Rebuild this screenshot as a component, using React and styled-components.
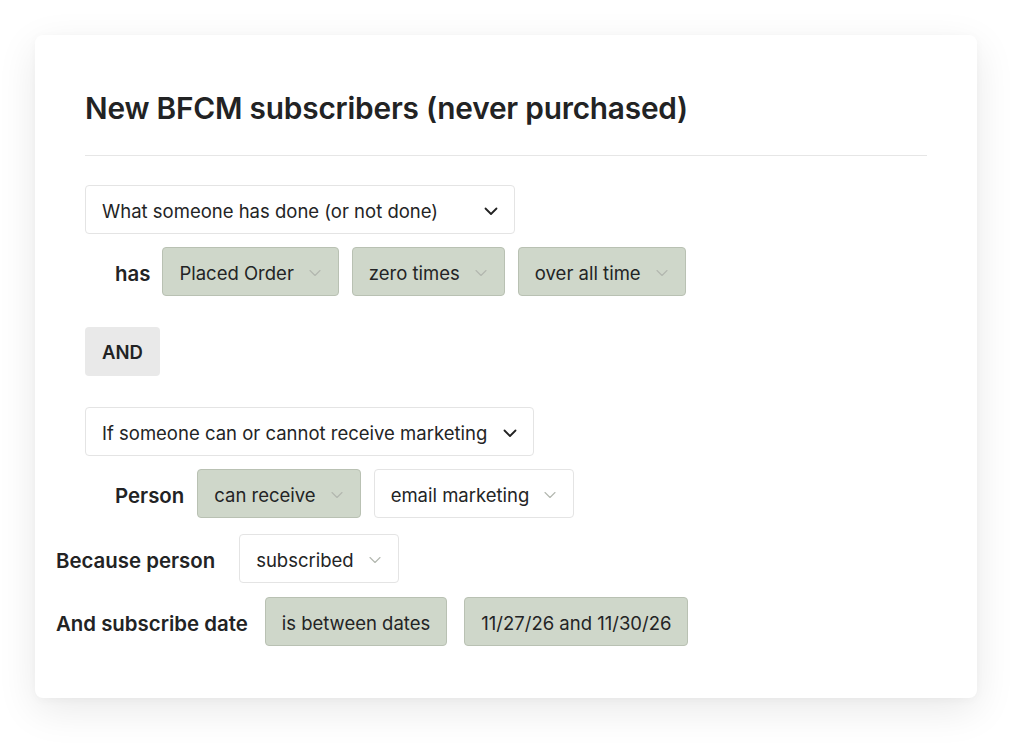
import styled, {createGlobalStyle} from 'styled-components';

const GlobalStyle = createGlobalStyle`
    html, body {
        margin: 0;
        padding: 0;
        background: #ffffff;
    }
    body {
        font-family: Inter, "Noto Sans", "Liberation Sans", sans-serif;
        color: #222324;
    }
`;

const Page = styled.div`
    width: 1032px;
    height: 753px;
    padding: 35px 0 0 35px;
    box-sizing: border-box;
`;

const Card = styled.div`
    width: 942px;
    height: 663px;
    box-sizing: border-box;
    background: #ffffff;
    border-radius: 8px;
    box-shadow: 0 12px 40px rgba(0, 0, 0, 0.09), 0 2px 10px rgba(0, 0, 0, 0.03);
    padding: 55px 50px 0 50px;
`;

const Title = styled.h1`
    margin: 0;
    font-size: 29.8px;
    font-weight: 600;
    letter-spacing: -0.2px;
    line-height: 36px;
    padding-bottom: 29px;
    border-bottom: 1px solid #e6e6e6;
`;

const Body = styled.div`
    display: flex;
    flex-direction: column;
    padding-top: 29px;
`;

const Row = styled.div`
    display: flex;
    align-items: center;
    gap: ${({gap}) => gap || 13}px;
    margin-top: ${({top}) => top || 0}px;
    margin-left: ${({indent}) => indent || 0}px;
`;

const Label = styled.span`
    font-size: 20.4px;
    font-weight: 600;
    padding-top: 3px;
    margin-right: ${({space}) => space || 0}px;
`;

const Select = styled.div`
    display: inline-flex;
    align-items: center;
    justify-content: space-between;
    height: 49px;
    box-sizing: border-box;
    padding: 2px ${({arrow}) => (arrow ? 17 : 16)}px 0 16px;
    width: ${({w}) => (w ? `${w}px` : 'auto')};
    border: 1px solid ${({filled}) => (filled ? '#b9c1b3' : '#e4e4e4')};
    background: ${({filled}) => (filled ? '#cfd7ca' : '#ffffff')};
    border-radius: 4px;
    font-size: 18.5px;
    color: #232425;
    white-space: nowrap;
`;

const Chevron = styled.svg`
    width: ${({size}) => size}px;
    height: ${({size}) => size}px;
    margin-left: ${({gap}) => gap}px;
    flex-shrink: 0;
`;

const AndButton = styled.div`
    display: inline-flex;
    align-items: center;
    justify-content: center;
    align-self: flex-start;
    width: 75px;
    height: 49px;
    margin-top: 31px;
    padding-top: 1px;
    box-sizing: border-box;
    border-radius: 4px;
    background: #e9e9e9;
    font-size: 18.5px;
    font-weight: 600;
`;

const DarkDown = () => (
    <Chevron size={14} gap={14} viewBox="0 0 14 14" fill="none">
        <path d="M1.5 4.5L7 10L12.5 4.5" stroke="#222" strokeWidth="1.8" strokeLinecap="round"
              strokeLinejoin="round"/>
    </Chevron>
);

const LightDown = () => (
    <Chevron size={12} gap={15} viewBox="0 0 12 12" fill="none">
        <path d="M1 3.5L6 8.5L11 3.5" stroke="#b2b7af" strokeWidth="1.1" strokeLinecap="round"
              strokeLinejoin="round"/>
    </Chevron>
);

const Dropdown = ({children, w}) => (
    <Select w={w}>
        {children}
        <DarkDown/>
    </Select>
);

const Chip = ({children, filled, noArrow}) => (
    <Select filled={filled} arrow={!noArrow}>
        {children}
        {!noArrow && <LightDown/>}
    </Select>
);

export default function App() {
    return (
        <Page>
            <GlobalStyle/>
            <Card>
                <Title>New BFCM subscribers (never purchased)</Title>
                <Body>
                    <Row>
                        <Dropdown w={430}>What someone has done (or not done)</Dropdown>
                    </Row>
                    <Row top={13} indent={30}>
                        <Label space={-1}>has</Label>
                        <Chip filled>Placed Order</Chip>
                        <Chip filled>zero times</Chip>
                        <Chip filled>over all time</Chip>
                    </Row>
                    <AndButton>AND</AndButton>
                    <Row top={31}>
                        <Dropdown w={449}>If someone can or cannot receive marketing</Dropdown>
                    </Row>
                    <Row top={13} indent={30}>
                        <Label>Person</Label>
                        <Chip filled>can receive</Chip>
                        <Chip>email marketing</Chip>
                    </Row>
                    <Row top={16} indent={-29}>
                        <Label space={11}>Because person</Label>
                        <Chip>subscribed</Chip>
                    </Row>
                    <Row top={14} indent={-29} gap={17}>
                        <Label>And subscribe date</Label>
                        <Chip filled noArrow>is between dates</Chip>
                        <Chip filled noArrow>11/27/26 and 11/30/26</Chip>
                    </Row>
                </Body>
            </Card>
        </Page>
    );
}
